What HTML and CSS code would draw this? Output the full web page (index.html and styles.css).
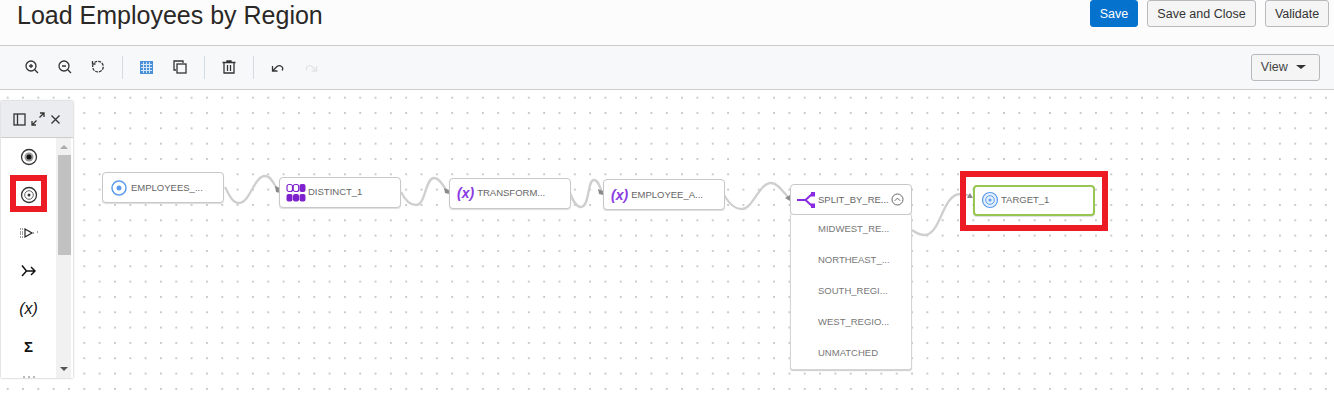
FILE: index.html
```html
<!DOCTYPE html>
<html lang="en">
<head>
    <meta charset="UTF-8">
    <title>Load Employees by Region</title>
    <link rel="stylesheet" href="styles.css">
</head>
<body>
    <header class="page-header">
        <h1>Load Employees by Region</h1>
        <div class="header-actions">
            <button class="btn btn-primary btn-save">Save</button>
            <button class="btn btn-close">Save and Close</button>
            <button class="btn btn-validate">Validate</button>
        </div>
    </header>

    <div class="toolbar">
        <button class="tool"><svg width="16" height="16" viewBox="0 0 16 16"><circle cx="7" cy="7" r="5" class="ico"/><path d="M10.800 10.800L14 14M5 7h4M7 5v4" class="ico"/></svg></button>
        <button class="tool"><svg width="16" height="16" viewBox="0 0 16 16"><circle cx="7" cy="7" r="5" class="ico"/><path d="M10.800 10.800L14 14M5 7h4" class="ico"/></svg></button>
        <button class="tool"><svg width="16" height="16" viewBox="0 0 16 16"><path d="M4.500 3.600A5.300 5.300 0 1 1 2.900 6" class="ico" stroke-dasharray="3 1"/><path d="M2.500 2v3h3" class="ico"/></svg></button>
        <span class="sep"></span>
        <button class="tool"><svg width="13" height="13" viewBox="0 0 13 13"><rect width="13" height="13" fill="#4a90d9"/><path d="M3.500 1v11M6.500 1v11M9.500 1v11M1 3.500h11M1 6.500h11M1 9.500h11" stroke="#d5e6f7" stroke-width="1" fill="none"/></svg></button>
        <button class="tool"><svg width="16" height="16" viewBox="0 0 16 16"><path d="M4 11H2V2h9v2" class="ico"/><rect x="5" y="5" width="9" height="9" class="ico"/></svg></button>
        <span class="sep"></span>
        <button class="tool"><svg width="16" height="16" viewBox="0 0 16 16"><path d="M1.500 3.500h13M6 3.500V2h4v1.500M3 3.500V14h10V3.500M6.500 6v6M9.500 6v6" class="ico"/></svg></button>
        <span class="sep"></span>
        <button class="tool"><svg width="16" height="16" viewBox="0 0 16 16"><path d="M2.500 7v5h5M2.500 12L7 7.500c2-1.500 5-.8 5.700 1.500.2 1-.2 2-.8 2.500" class="ico"/></svg></button>
        <button class="tool"><svg width="16" height="16" viewBox="0 0 16 16"><path d="M13.500 7v5h-5M13.500 12L9 7.500c-2-1.500-5-.8-5.700 1.500-.2 1 .2 2 .8 2.500" class="ico ico-off"/></svg></button>
        <button class="btn btn-view">View <span class="caret"></span></button>
    </div>

    <main class="canvas">
        <!-- links between the nodes -->
        <svg class="links" width="1334" height="311" viewBox="0 90 1334 311">
            <g class="link">
                <path d="M225 187C230 197 233 203 239 203C250 203 254 176 265 176C271 176 274 184 277 189"/>
                <path d="M401 192C405 200 410 205 416 205C426 205 425 178 434 178C440 178 443 186 447 191"/>
                <path d="M570 193C573 201 576 207 581 207C590 207 587 180 594 180C598 180 600 187 602 192"/>
                <path d="M724 195C729 203 734 209 742 209C753 209 759 183 771 183C778 183 783 192 788 197"/>
                <path d="M912 230C916 233 920 235 925 235C941 234 942 195 960 194C964 194 966 195 970 196"/>
            </g>
            <g class="arrows">
                <path d="M275 186L280 188L280 193L276 192Z"/>
                <path d="M444 188L449 190L449 194L445 193Z"/>
                <path d="M598 189L603 191L603 195L599 194Z"/>
                <path d="M785 198L790 195L790 201Z"/>
                <path d="M967 198L970 193L973 198Z"/>
            </g>
        </svg>

        <div class="node node-source">
            <svg width="18" height="18" viewBox="0 0 18 18"><circle cx="9" cy="9" r="7" fill="none" stroke="#5b9cec" stroke-width="1.500"/><circle cx="9" cy="9" r="2.500" fill="#5b9cec"/></svg>
            <span>EMPLOYEES_...</span>
        </div>
        <div class="node node-distinct">
            <svg width="20" height="20" viewBox="0 0 20 20" class="purple">
                <rect x="1" y="2.500" width="5.500" height="7" rx="2" class="hollow"/><rect x="7.200" y="2.500" width="5.500" height="7" rx="2" class="hollow"/><rect x="13.500" y="2" width="6" height="8" rx="2" class="solid"/>
                <rect x="0.500" y="12" width="6" height="7.500" rx="2" class="solid"/><rect x="7" y="12" width="6" height="7.500" rx="2" class="solid"/><rect x="13.500" y="12" width="6" height="7.500" rx="2" class="solid"/>
            </svg>
            <span>DISTINCT_1</span>
        </div>
        <div class="node node-transform">
            <em class="fx">(x)</em>
            <span>TRANSFORM...</span>
        </div>
        <div class="node node-expr">
            <em class="fx">(x)</em>
            <span>EMPLOYEE_A...</span>
        </div>

        <div class="split">
            <div class="node node-split">
                <svg width="19" height="18" viewBox="0 0 19 18"><path d="M0 9h8.500l6-5.500M8.500 9l6 5.500" fill="none" stroke="#8a2be2" stroke-width="2"/><path d="M14 1h4v4.500h-4zM14 12.500h4V17h-4z" fill="#8a2be2"/></svg>
                <span>SPLIT_BY_RE...</span>
                <svg class="collapse" width="13" height="13" viewBox="0 0 13 13"><circle cx="6.500" cy="6.500" r="5.500" fill="none" stroke="#666"/><path d="M3.800 7.800l2.700-2.700 2.700 2.700" fill="none" stroke="#666"/></svg>
            </div>
            <ul class="split-list">
                <li>MIDWEST_RE...</li>
                <li>NORTHEAST_...</li>
                <li>SOUTH_REGI...</li>
                <li>WEST_REGIO...</li>
                <li>UNMATCHED</li>
            </ul>
        </div>

        <div class="target-mark">
            <div class="node node-target">
                <svg width="18" height="18" viewBox="0 0 18 18"><circle cx="9" cy="9" r="7.500" fill="#e3effc" stroke="#5b9cec" stroke-width="1.200"/><circle cx="9" cy="9" r="4.300" fill="none" stroke="#5b9cec"/><circle cx="9" cy="9" r="1.500" fill="#5b9cec"/></svg>
                <span>TARGET_1</span>
            </div>
        </div>

        <aside class="palette">
            <div class="palette-head">
                <svg width="13" height="13" viewBox="0 0 13 13"><rect x="1" y="1" width="11" height="11" class="ico"/><path d="M4.500 1v11" class="ico"/></svg>
                <svg width="14" height="14" viewBox="0 0 14 14"><path d="M1 13l4.500-4.500M1 9v4h4M13 1L8.500 5.500M9 1h4v4" class="ico"/></svg>
                <svg width="11" height="11" viewBox="0 0 11 11"><path d="M1.500 1.500l8 8M9.500 1.500l-8 8" class="ico"/></svg>
            </div>
            <div class="palette-body">
                <div class="palette-items">
                    <div class="pal-item"><svg width="18" height="18" viewBox="0 0 18 18"><circle cx="9" cy="9" r="7.500" class="ico"/><circle cx="9" cy="9" r="4.500" fill="#999"/><circle cx="9" cy="9" r="2.500" fill="#111"/></svg></div>
                    <div class="pal-item pal-marked"><svg width="18" height="18" viewBox="0 0 18 18"><circle cx="9" cy="9" r="7.500" class="ico"/><circle cx="9" cy="9" r="4.300" fill="none" stroke="#666"/><circle cx="9" cy="9" r="1.500" fill="#333"/></svg></div>
                    <div class="pal-item"><svg width="20" height="14" viewBox="0 0 20 14"><path d="M6 3l7 4-7 4z" fill="none" stroke="#222" stroke-width="1.200"/><path d="M1 3h4M1 6h3M1 8h3M1 11h4M14 7h2M18 6h1" stroke="#444" stroke-dasharray="1 1" fill="none"/></svg></div>
                    <div class="pal-item"><svg width="15" height="14" viewBox="0 0 15 14"><path d="M1 1.500l4.500 5.500L1 12M5.500 7H14M10 3l4 4-4 4" class="ico ico-heavy"/></svg></div>
                    <div class="pal-item pal-fx"><em>(x)</em></div>
                    <div class="pal-item pal-sigma">&Sigma;</div>
                    <svg class="pal-more" width="12" height="2" viewBox="0 0 12 2"><path d="M0 1h2M5 1h2M10 1h2" stroke="#777" fill="none"/></svg>
                </div>
                <div class="scroll">
                    <span class="scroll-up"></span>
                    <span class="scroll-thumb"></span>
                    <span class="scroll-down"></span>
                </div>
            </div>
        </aside>
        <span class="pal-mark"></span>
    </main>
</body>
</html>
```

FILE: styles.css
```css
html, body {
    margin: 0;
    height: 401px;
    overflow: hidden;
}
body {
    font-family: "Liberation Sans", Arial, sans-serif;
    color: #201e1c;
    background-color: #fff;
}
.page-header {
    height: 46px;
    box-sizing: border-box;
    display: flex;
    justify-content: space-between;
    align-items: flex-start;
    padding: 0 5px 0 17px;
    background-color: #fcfcfd;
    border-bottom: 1px solid #ccc;
}
h1 {
    margin: 0;
    padding-top: 1px;
    font-size: 25px;
    font-weight: normal;
    line-height: 28px;
    color: #2a2826;
}
.header-actions {
    display: flex;
    gap: 9px;
}
.btn {
    height: 27px;
    box-sizing: border-box;
    padding: 0;
    font-family: inherit;
    font-size: 12.500px;
    color: #333;
    background-color: #f5f5f6;
    border: 1px solid #b9b9bd;
    border-radius: 3px;
}
.btn-primary {
    color: #fff;
    background-color: #0572ce;
    border-color: #0572ce;
}
.btn-save { width: 48px; }
.btn-close { width: 109px; }
.btn-validate { width: 64px; }
.toolbar {
    height: 44px;
    box-sizing: border-box;
    display: flex;
    align-items: center;
    padding: 0 14px 1px 15px;
    background-color: #f7f8fa;
    border-bottom: 1px solid #ccc;
}
.tool {
    width: 33px;
    height: 26px;
    padding: 0;
    display: flex;
    align-items: center;
    justify-content: center;
    background: none;
    border: none;
}
.sep {
    width: 1px;
    height: 23px;
    margin: 0 7px 0 8px;
    background-color: #d3dbe3;
}
.ico {
    fill: none;
    stroke: #333;
    stroke-width: 1.300;
}
.ico-off { stroke: #e2e3e5; }
.ico-heavy { stroke: #111; stroke-width: 1.500; }
.btn-view {
    width: 69px;
    margin-left: auto;
    padding-right: 4px;
    color: #444;
}
.caret {
    display: inline-block;
    margin-left: 5px;
    vertical-align: 2px;
    border-top: 4px solid #333;
    border-left: 5px solid transparent;
    border-right: 5px solid transparent;
}
.canvas {
    position: relative;
    height: 311px;
    background-color: #fff;
    background-image: radial-gradient(#c9c9c9 0.8px, transparent 1px);
    background-size: 15.330px 15.330px;
}
.links {
    position: absolute;
    left: 0;
    top: 0;
}
.link path {
    fill: none;
    stroke: #cfcfcf;
    stroke-width: 2.300;
}
.arrows path { fill: #8a8a8a; }
.node {
    position: absolute;
    box-sizing: border-box;
    width: 122px;
    height: 31px;
    display: flex;
    align-items: center;
    font-size: 9.500px;
    color: #666;
    background-color: #fff;
    border: 1px solid #c8c8c8;
    border-radius: 4px;
    box-shadow: 0 1px 1px #ddd;
}
.node-source { left: 102px; top: 82px; padding-left: 7px; gap: 3px; }
.node-distinct { left: 279px; top: 87px; padding: 0 0 2px 6px; gap: 2px; }
.node-transform { left: 449px; top: 88px; padding: 0 0 2px 7px; gap: 3px; }
.node-expr { left: 603px; top: 89px; padding-left: 7px; gap: 3px; }
.purple .hollow { fill: none; stroke: #7e22ce; stroke-width: 1.200; }
.purple .solid { fill: #7e22ce; }
.fx {
    font-size: 14px;
    font-weight: bold;
    color: #8a3be2;
}
.split {
    position: absolute;
    left: 790px;
    top: 94px;
    width: 122px;
}
.node-split {
    position: static;
    padding-left: 6px;
    gap: 2px;
}
.collapse { margin-left: auto; margin-right: 7px; }
.split-list {
    list-style: none;
    margin: 0;
    padding: 0;
    height: 155px;
    box-sizing: border-box;
    background-color: #fff;
    border: 1px solid #d5d5d5;
    border-top: none;
    border-radius: 0 0 3px 3px;
    box-shadow: 0 1px 1px #ccc;
    font-size: 9.500px;
    color: #777;
}
.split-list li {
    height: 31px;
    line-height: 27px;
    padding-left: 27px;
}
.target-mark {
    position: absolute;
    left: 960px;
    top: 81px;
    width: 148px;
    height: 60px;
    box-sizing: border-box;
    border: 6px solid #ed1c24;
}
.node-target {
    left: 7px;
    top: 8px;
    padding: 0 0 2px 6px;
    gap: 2px;
    border: 2px solid #97c653;
}
.palette {
    position: absolute;
    left: 1px;
    top: 11px;
    width: 72px;
    height: 277px;
    display: flex;
    flex-direction: column;
    background-color: #fff;
    box-shadow: 0 0 2px #aaa;
}
.palette-head {
    height: 36px;
    flex: none;
    display: flex;
    align-items: center;
    justify-content: center;
    gap: 5px;
    background-color: #ebecef;
    border-bottom: 1px solid #ccc;
}
.palette-body {
    flex: 1;
    display: flex;
    min-height: 0;
}
.palette-items {
    flex: 1;
    overflow: hidden;
}
.pal-item {
    height: 38px;
    display: flex;
    align-items: center;
    justify-content: center;
    color: #111;
}
.pal-fx em { font-size: 16px; }
.pal-sigma {
    font-size: 15px;
    font-weight: bold;
    padding-bottom: 2px;
    box-sizing: border-box;
}
.pal-more {
    display: block;
    margin: 10px auto 0;
}
.scroll {
    width: 15px;
    margin-right: 2px;
    display: flex;
    flex-direction: column;
    align-items: center;
    background-color: #f1f1f1;
}
.scroll-thumb {
    width: 13px;
    height: 100px;
    margin-top: 6px;
    align-self: flex-end;
    background-color: #c1c1c1;
}
.scroll-up, .scroll-down {
    margin-top: 7px;
    border-left: 4px solid transparent;
    border-right: 4px solid transparent;
}
.scroll-up { border-bottom: 4px solid #aaa; }
.scroll-down {
    margin-top: auto;
    margin-bottom: 7px;
    border-top: 4px solid #555;
}
.pal-mark {
    position: absolute;
    left: 10px;
    top: 85px;
    width: 37px;
    height: 37px;
    box-sizing: border-box;
    border: 6px solid #ed1c24;
}
```
